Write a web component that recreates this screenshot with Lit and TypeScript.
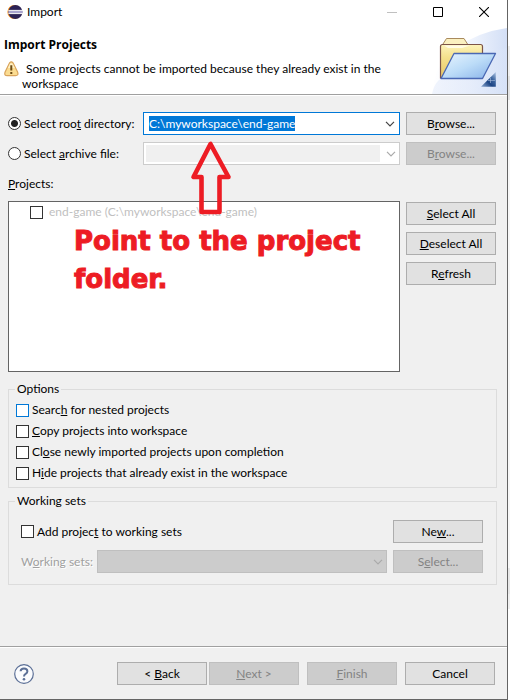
import { LitElement, html, css } from "lit";
import { customElement, query } from "lit/decorators.js";

const chevron = html`<svg class="chevron" viewBox="0 0 10 6" width="10" height="6" aria-hidden="true">
  <path d="M1 .8 5 4.8 9 .8" fill="none" stroke="currentColor" stroke-width="1.2" />
</svg>`;

const eclipseLogo = html`<svg width="16" height="16" viewBox="0 0 16 16" aria-hidden="true">
  <circle cx="7.4" cy="8" r="7" fill="#f7941e" />
  <circle cx="8.4" cy="8" r="7" fill="#2c2255" />
  <path d="M1.4 6.400h14M1.4 9.600h14" stroke="#fff" stroke-width="1" />
  <path d="M1.4 8h14" stroke="#a9a4cf" stroke-width="2" />
</svg>`;

const warningIcon = html`<svg class="warning" width="15" height="16" viewBox="0 0 15 16" aria-hidden="true">
  <path d="M5.6 1.8Q7.3-.2 9 1.8L13.7 11.3Q14.7 14.6 11.6 14.7H3.2Q0 14.6 1 11.3Z" fill="#fbdc91" stroke="#d9a45c" stroke-width="1.2" />
  <path d="M5.6 3.4Q7.3 1 9 3.4L10.8 7H3.9Z" fill="#fff0c4" />
  <path d="M7.3 4.2v5.4M7.3 11v2" stroke="#6b4a14" stroke-width="2" />
</svg>`;

const banner = html`<svg class="banner" width="75" height="66" viewBox="0 0 75 66" aria-hidden="true">
  <defs>
    <linearGradient id="sky" x1="0" y1="0" x2="1" y2="0">
      <stop offset="0" stop-color="#fff" /><stop offset=".5" stop-color="#f1f5fd" /><stop offset="1" stop-color="#d3dff6" />
    </linearGradient>
    <linearGradient id="haze" x1="0" y1="0" x2="1" y2="0">
      <stop offset="0" stop-color="#e6edfb" /><stop offset="1" stop-color="#d8e3f8" />
    </linearGradient>
    <linearGradient id="back" x1="0" y1="0" x2="0" y2="1">
      <stop offset="0" stop-color="#fdf3b9" /><stop offset=".4" stop-color="#f4e08b" /><stop offset="1" stop-color="#e9c766" />
    </linearGradient>
    <linearGradient id="front" x1="0" y1="0" x2="1" y2="1">
      <stop offset="0" stop-color="#e9f5fe" /><stop offset=".5" stop-color="#bcdcf8" /><stop offset="1" stop-color="#86b0e8" />
    </linearGradient>
    <linearGradient id="corner" x1="0" y1="1" x2="1" y2="0">
      <stop offset="0" stop-color="#8fabd3" /><stop offset=".4" stop-color="#1d4584" /><stop offset=".65" stop-color="#3d659f" /><stop offset="1" stop-color="#b4c9e6" />
    </linearGradient>
  </defs>
  <path d="M0 66Q2 36 24 20Q46 4 75 0V66Z" fill="url(#sky)" />
  <path d="M0 66Q3 50 18 46Q40 24 75 20V66Z" fill="url(#haze)" opacity=".6" />
  <path d="M11 16 14.500 10.500H32L35.500 16" fill="#fbf0c0" stroke="#a98a5e" />
  <path d="M8.500 50V18.500Q8.500 16.500 10.500 16.500H48.500Q50.500 16.500 50.500 18.500V50Z" fill="url(#back)" stroke="#7c5448" stroke-width="1.200" />
  <path d="M12 17.500H38L30 20H16Z" fill="#fffbe6" />
  <path d="M9 50.500 22 25.500H63.500L50.500 50.500Z" fill="url(#front)" stroke="#4a68b4" stroke-width="1.300" stroke-linejoin="round" />
  <path d="M63.800 44V58.800H49Z" fill="url(#corner)" />
  <path d="M58.500 50V55M56 52.500H63" stroke="#dfeaf8" stroke-width=".6" opacity=".7" />
</svg>`;

const arrow = html`<svg class="arrow" width="42" height="76" viewBox="0 0 42 76" aria-hidden="true">
  <path d="M20.500 4 3.500 37H11.500V72H29.500V37H38.500Z" fill="none" stroke="#ed1c24" stroke-width="4.600" stroke-linejoin="round" />
</svg>`;

@customElement("app-root")
export class AppRoot extends LitElement {
  @query("#root-dir") rootDirectory!: HTMLInputElement;

  static styles = css`
    :host {
      display: block;
      background: linear-gradient(#fff 46px, #f0f0f0 46px 76px, #e4e4e4 76px 100px, #f8f8f8 100px 568px, #e8e8e8 568px 594px, #f0f0f0 594px 609px, #fff 609px);
      color: #000;
      font: 12px/16px Lato, sans-serif;
    }
    * { box-sizing: border-box; }
    .dialog {
      display: flex;
      flex-direction: column;
      min-height: 100vh;
      margin-right: 2px;
      border: solid #646464;
      border-width: 0 1px 1px 0;
      background: #f0f0f0;
    }
    .titlebar {
      display: flex;
      align-items: center;
      height: 28px;
      padding: 0 0 4px 7px;
      background: #fff;
    }
    .caption { flex: 1; margin-left: 4px; }
    .winbtn {
      display: grid;
      place-items: center;
      width: 46px;
      height: 24px;
      padding: 0;
      border: 0;
      background: none;
      color: #000;
    }
    .winbtn:disabled { color: #c0c0c0; }
    .header {
      display: flex;
      align-items: flex-end;
      background: #fff;
      border-bottom: 1px solid #a0a0a0;
      height: 67px;
    }
    .heading { flex: 1; align-self: flex-start; padding: 8px 0 0 4px; }
    h1 { margin: 0; font: 700 12px/18px "Open Sans", sans-serif; }
    .message { display: flex; gap: 3px; margin-top: 7px; }
    .message p { flex: 1; margin: 0; line-height: 15px; text-indent: 4px; }
    .warning, .banner { flex: none; display: block; }
    .page {
      position: relative;
      flex: 1;
      padding: 16px 10px 12px 8px;
      border-top: 1px solid #fff;
    }
    .source {
      display: grid;
      grid-template-columns: 129px minmax(0, 1fr) 90px;
      gap: 7px 6px;
      align-items: center;
      margin-right: 1px;
    }
    .choice { display: flex; align-items: center; gap: 3px; white-space: nowrap; }
    input[type="radio"], input[type="checkbox"] {
      appearance: none;
      flex: none;
      width: 13px;
      height: 13px;
      margin: 0;
      border: 1px solid #333;
      background: #fff;
    }
    input[type="radio"] { border-radius: 50%; }
    input[type="radio"]:checked { background: radial-gradient(circle, #222 3px, #fff 4px); }
    input.hot { border-color: #0078d7; }
    .btn {
      width: 90px;
      height: 23px;
      padding: 0;
      border: 1px solid #adadad;
      background: #e1e1e1;
      color: #000;
      font: inherit;
    }
    .btn:disabled { border-color: #bfbfbf; background: #ccc; color: #838383; }
    .combo {
      display: flex;
      align-items: center;
      height: 23px;
      border: 1px solid #0078d7;
      background: #fff;
      color: #444;
    }
    .combo input {
      flex: 1;
      min-width: 0;
      height: 21px;
      padding: 0 0 0 5px;
      border: 0;
      outline: 0;
      background: none;
      font: inherit;
    }
    .combo input::selection { background: #0078d7; color: #fff; }
    .drop {
      display: grid;
      place-items: center;
      width: 18px;
      height: 21px;
      padding: 0;
      border: 0;
      background: none;
      color: inherit;
    }
    .pick { display: grid; align-items: center; color: #aaa; }
    .pick select {
      grid-area: 1 / 1;
      appearance: none;
      width: 100%;
      height: 23px;
      border: 1px solid #bfbfbf;
      border-radius: 0;
      background: #ccc;
      font: inherit;
      opacity: 1;
    }
    .pick .chevron { grid-area: 1 / 1; justify-self: end; margin-right: 4px; z-index: 1; }
    .pick.editable select {
      padding: 2px 19px 2px 2px;
      border-color: #ccc;
      background: linear-gradient(#f0f0f0, #f0f0f0) 0 0 / 100% 100% no-repeat content-box #fff;
      background-clip: border-box;
    }
    .listlabel { margin: 11px 0 9px; }
    .projects { display: grid; grid-template-columns: minmax(0, 1fr) 90px; gap: 6px; margin-right: 1px; }
    .list {
      min-height: 171px;
      padding: 2px 21px;
      border: 1px solid #646464;
      background: #fff;
    }
    .list .choice { gap: 6px; color: #bfbfbf; }
    .side { display: flex; flex-direction: column; gap: 7px; padding-top: 1px; }
    fieldset { min-width: 0; margin: 9px 0 0; border: 1px solid #dcdcdc; }
    fieldset + fieldset { margin-top: 5px; }
    legend { padding: 0 2px; margin-left: -1px; }
    .options { display: flex; flex-direction: column; gap: 5px; padding: 5px 7px 6px 7px; }
    .sets { padding: 11px 13px 11px 12px; }
    .sets legend { margin-left: -6px; }
    .row { display: flex; align-items: center; gap: 6px; }
    .row + .row { margin-top: 7px; }
    .row .choice, .row .pick { flex: 1; }
    .dim { color: #a0a0a0; text-shadow: 1px 1px #fff; width: 70px; white-space: nowrap; }
    .arrow { position: absolute; left: 190px; top: 44px; pointer-events: none; }
    .note {
      position: absolute;
      left: 74px;
      top: 126px;
      width: 320px;
      margin: 0;
      color: #ed1c24;
      font: 700 26px/38px "DejaVu Sans", sans-serif;
      -webkit-text-stroke: 1px #ed1c24;
      pointer-events: none;
    }
    .footer {
      display: flex;
      align-items: center;
      padding: 15px 12px 14px 14px;
      border-top: 1px solid #a0a0a0;
      box-shadow: inset 0 1px #fff;
    }
    .help { width: 20px; height: 20px; padding: 0; border: 0; background: none; margin-right: auto; }
    .help svg { display: block; }
    .nav { display: flex; gap: 2px; margin-right: 8px; }
    .end { display: flex; gap: 8px; }
  `;

  firstUpdated() {
    this.rootDirectory.focus();
    this.rootDirectory.select();
  }

  render() {
    return html`
      <div class="dialog">
        <div class="titlebar">
          ${eclipseLogo}
          <span class="caption">Import</span>
          <button class="winbtn" disabled aria-label="Minimize">
            <svg width="10" height="10"><path d="M0 5.500H10" stroke="currentColor" /></svg>
          </button>
          <button class="winbtn" aria-label="Maximize">
            <svg width="10" height="10"><path d="M.5.5h9v9h-9Z" fill="none" stroke="currentColor" /></svg>
          </button>
          <button class="winbtn" aria-label="Close">
            <svg width="10" height="10"><path d="M0 0 10 10M10 0 0 10" stroke="currentColor" stroke-width="1.100" /></svg>
          </button>
        </div>
        <header class="header">
          <div class="heading">
            <h1>Import Projects</h1>
            <div class="message">
              ${warningIcon}
              <p>Some projects cannot be imported because they already exist in the workspace</p>
            </div>
          </div>
          ${banner}
        </header>
        <main class="page">
          <div class="source">
            <label class="choice"><input type="radio" name="source" checked /><span>Select roo<u>t</u> directory:</span></label>
            <div class="combo">
              <input id="root-dir" aria-label="Root directory" value="C:\\myworkspace\\end-game" spellcheck="false" />
              <button class="drop" aria-label="Recent directories">${chevron}</button>
            </div>
            <button class="btn">B<u>r</u>owse...</button>
            <label class="choice"><input type="radio" name="source" /><span>Select <u>a</u>rchive file:</span></label>
            <div class="pick editable"><select disabled aria-label="Archive file"></select>${chevron}</div>
            <button class="btn" disabled>B<u>r</u>owse...</button>
          </div>
          <div class="listlabel" id="projects"><u>P</u>rojects:</div>
          <div class="projects">
            <div class="list" role="group" aria-labelledby="projects">
              <label class="choice"><input type="checkbox" /><span>end-game (C:\\myworkspace\\end-game)</span></label>
            </div>
            <div class="side">
              <button class="btn"><u>S</u>elect All</button>
              <button class="btn"><u>D</u>eselect All</button>
              <button class="btn">R<u>e</u>fresh</button>
            </div>
          </div>
          <fieldset class="options">
            <legend>Options</legend>
            <label class="choice"><input type="checkbox" class="hot" /><span>Searc<u>h</u> for nested projects</span></label>
            <label class="choice"><input type="checkbox" /><span><u>C</u>opy projects into workspace</span></label>
            <label class="choice"><input type="checkbox" /><span>Cl<u>o</u>se newly imported projects upon completion</span></label>
            <label class="choice"><input type="checkbox" /><span>H<u>i</u>de projects that already exist in the workspace</span></label>
          </fieldset>
          <fieldset class="sets">
            <legend>Working sets</legend>
            <div class="row">
              <label class="choice"><input type="checkbox" /><span>Add projec<u>t</u> to working sets</span></label>
              <button class="btn">Ne<u>w</u>...</button>
            </div>
            <div class="row">
              <label class="dim" for="sets">W<u>o</u>rking sets:</label>
              <div class="pick"><select id="sets" disabled></select>${chevron}</div>
              <button class="btn" disabled>S<u>e</u>lect...</button>
            </div>
          </fieldset>
          ${arrow}
          <p class="note">Point to the project folder.</p>
        </main>
        <footer class="footer">
          <button class="help" aria-label="Help">
            <svg width="20" height="20" viewBox="0 0 20 20">
              <circle cx="10" cy="10" r="9.300" fill="#fafbfd" stroke="#5b6f96" stroke-width="1.200" />
              <path d="M6.600 7.200Q6.800 4.400 10 4.400T13.400 7.200Q13.400 8.700 11.600 9.800 10 10.700 10 12.400" fill="none" stroke="#5b6f96" stroke-width="2" />
              <circle cx="10" cy="15.200" r="1.300" fill="#5b6f96" />
            </svg>
          </button>
          <div class="nav">
            <button class="btn">&lt; <u>B</u>ack</button>
            <button class="btn" disabled><u>N</u>ext &gt;</button>
          </div>
          <div class="end">
            <button class="btn" disabled><u>F</u>inish</button>
            <button class="btn">Cancel</button>
          </div>
        </footer>
      </div>
    `;
  }
}
